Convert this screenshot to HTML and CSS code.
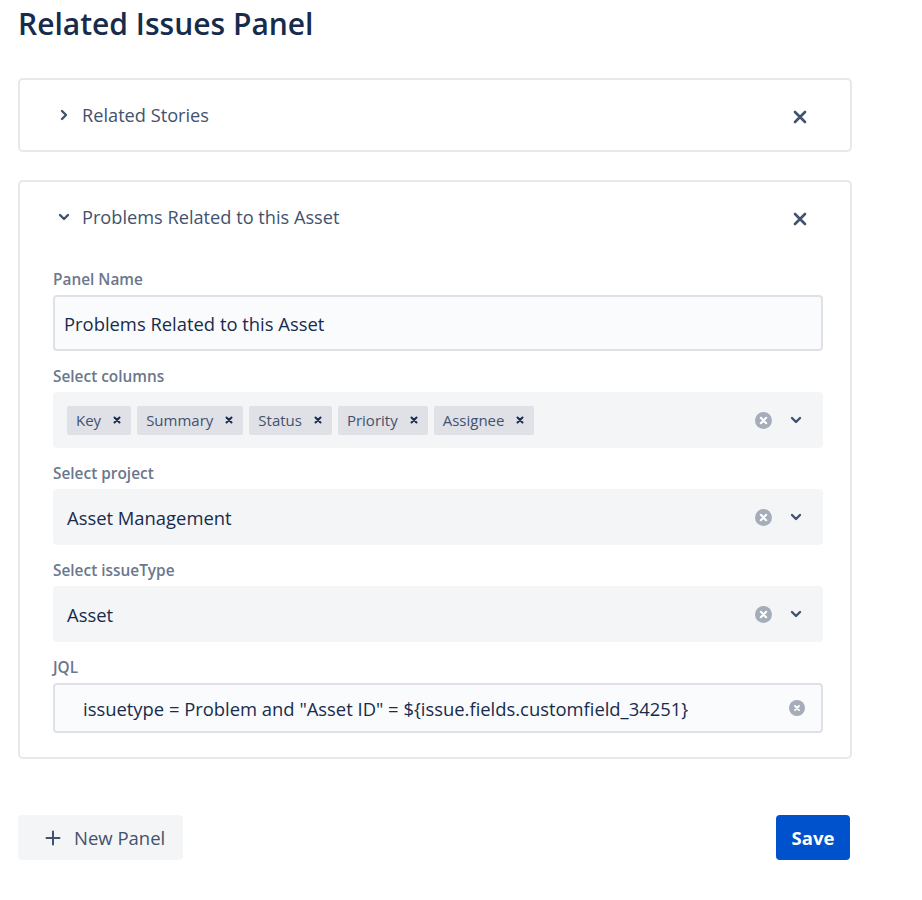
FILE: index.html
```html
<!DOCTYPE html>
<html lang="en">
<head>
<meta charset="utf-8">
<title>Related Issues Panel</title>
<link rel="stylesheet" href="styles.css">
</head>
<body>
<main class="page">
  <h1 class="title">Related Issues Panel</h1>

  <section class="card">
    <div class="card-header">
      <svg class="chev-right" width="10" height="12" viewBox="0 0 10 12"><path d="M3 2 L7 6 L3 10" fill="none" stroke="#42526E" stroke-width="2.4" stroke-linecap="round" stroke-linejoin="round"/></svg>
      <span class="card-title">Related Stories</span>
      <svg class="close" width="14" height="14" viewBox="0 0 14 14"><path d="M2 2 L12 12 M12 2 L2 12" stroke="#42526E" stroke-width="2.6" stroke-linecap="round"/></svg>
    </div>
  </section>

  <section class="card">
    <div class="card-header">
      <svg class="chev-down" width="12" height="10" viewBox="0 0 12 10"><path d="M2 3 L6 7 L10 3" fill="none" stroke="#42526E" stroke-width="2.4" stroke-linecap="round" stroke-linejoin="round"/></svg>
      <span class="card-title">Problems Related to this Asset</span>
      <svg class="close" width="14" height="14" viewBox="0 0 14 14"><path d="M2 2 L12 12 M12 2 L2 12" stroke="#42526E" stroke-width="2.6" stroke-linecap="round"/></svg>
    </div>
    <div class="card-body">
      <div class="field">
        <label class="label">Panel Name</label>
        <div class="input tall">Problems Related to this Asset</div>
      </div>
      <div class="field">
        <label class="label">Select columns</label>
        <div class="select">
          <div class="tags">
            <span class="tag">Key<svg class="tag-x" width="8" height="8" viewBox="0 0 8 8"><path d="M1.5 1.5 L6.5 6.5 M6.5 1.5 L1.5 6.5" stroke="#172B4D" stroke-width="2" stroke-linecap="round"/></svg></span>
            <span class="tag">Summary<svg class="tag-x" width="8" height="8" viewBox="0 0 8 8"><path d="M1.5 1.5 L6.5 6.5 M6.5 1.5 L1.5 6.5" stroke="#172B4D" stroke-width="2" stroke-linecap="round"/></svg></span>
            <span class="tag">Status<svg class="tag-x" width="8" height="8" viewBox="0 0 8 8"><path d="M1.5 1.5 L6.5 6.5 M6.5 1.5 L1.5 6.5" stroke="#172B4D" stroke-width="2" stroke-linecap="round"/></svg></span>
            <span class="tag">Priority<svg class="tag-x" width="8" height="8" viewBox="0 0 8 8"><path d="M1.5 1.5 L6.5 6.5 M6.5 1.5 L1.5 6.5" stroke="#172B4D" stroke-width="2" stroke-linecap="round"/></svg></span>
            <span class="tag">Assignee<svg class="tag-x" width="8" height="8" viewBox="0 0 8 8"><path d="M1.5 1.5 L6.5 6.5 M6.5 1.5 L1.5 6.5" stroke="#172B4D" stroke-width="2" stroke-linecap="round"/></svg></span>
          </div>
          <div class="indicators">
            <svg class="clear" width="17" height="17" viewBox="0 0 16 16"><circle cx="8" cy="8" r="8" fill="#A5ADBA"/><path d="M5.5 5.5 L10.5 10.5 M10.5 5.5 L5.5 10.5" stroke="#fff" stroke-width="2" stroke-linecap="round"/></svg>
            <svg class="dropdown" width="12" height="10" viewBox="0 0 12 10"><path d="M2 3 L6 7 L10 3" fill="none" stroke="#42526E" stroke-width="2.4" stroke-linecap="round" stroke-linejoin="round"/></svg>
          </div>
        </div>
      </div>
      <div class="field">
        <label class="label">Select project</label>
        <div class="select">
          <span class="value">Asset Management</span>
          <div class="indicators">
            <svg class="clear" width="17" height="17" viewBox="0 0 16 16"><circle cx="8" cy="8" r="8" fill="#A5ADBA"/><path d="M5.5 5.5 L10.5 10.5 M10.5 5.5 L5.5 10.5" stroke="#fff" stroke-width="2" stroke-linecap="round"/></svg>
            <svg class="dropdown" width="12" height="10" viewBox="0 0 12 10"><path d="M2 3 L6 7 L10 3" fill="none" stroke="#42526E" stroke-width="2.4" stroke-linecap="round" stroke-linejoin="round"/></svg>
          </div>
        </div>
      </div>
      <div class="field">
        <label class="label">Select issueType</label>
        <div class="select">
          <span class="value">Asset</span>
          <div class="indicators">
            <svg class="clear" width="17" height="17" viewBox="0 0 16 16"><circle cx="8" cy="8" r="8" fill="#A5ADBA"/><path d="M5.5 5.5 L10.5 10.5 M10.5 5.5 L5.5 10.5" stroke="#fff" stroke-width="2" stroke-linecap="round"/></svg>
            <svg class="dropdown" width="12" height="10" viewBox="0 0 12 10"><path d="M2 3 L6 7 L10 3" fill="none" stroke="#42526E" stroke-width="2.4" stroke-linecap="round" stroke-linejoin="round"/></svg>
          </div>
        </div>
      </div>
      <div class="field">
        <label class="label">JQL</label>
        <div class="input jql">
          <span class="jql-text">issuetype = Problem and "Asset ID" = ${issue.fields.customfield_34251}</span>
          <svg class="jql-clear" width="16" height="16" viewBox="0 0 16 16"><circle cx="8" cy="8" r="8" fill="#A5ADBA"/><path d="M6 6 L10 10 M10 6 L6 10" stroke="#fff" stroke-width="1.8" stroke-linecap="round"/></svg>
        </div>
      </div>
    </div>
  </section>

  <div class="footer">
    <button class="btn btn-new"><svg width="16" height="16" viewBox="0 0 16 16"><path d="M8 1.5 V14.5 M1.5 8 H14.5" stroke="#42526E" stroke-width="2" stroke-linecap="round"/></svg><span>New Panel</span></button>
    <button class="btn btn-save">Save</button>
  </div>
</main>
</body>
</html>
```

FILE: styles.css
```css
* { box-sizing: border-box; }

body {
  margin: 0;
  background: #ffffff;
  font-family: "Open Sans", "Noto Sans", "Liberation Sans", sans-serif;
  color: #172B4D;
}

.page {
  width: 834px;
  margin-left: 18px;
  display: flex;
  flex-direction: column;
}

.title {
  margin: 0 0 34px 0;
  padding-top: 4px;
  font-size: 30px;
  line-height: 40px;
  font-weight: 600;
  color: #172B4D;
}

.card {
  border: 2px solid #E6E8EC;
  border-radius: 5px;
  margin-bottom: 28px;
  background: #fff;
}

.card-header {
  height: 70px;
  display: flex;
  align-items: center;
  padding: 0 43px 0 38px;
}

.chev-right, .chev-down {
  flex: none;
}
.chev-right { margin-left: 1px; margin-right: 13px; }
.chev-down { margin-right: 12px; }

.card-title {
  flex: 1;
  font-size: 18.2px;
  color: #42526E;
  line-height: 24px;
}

.close { flex: none; margin-top: 4px; }

.card-body {
  display: flex;
  flex-direction: column;
  gap: 16px;
  padding: 18px 27px 24px 33px;
}

.field {
  display: flex;
  flex-direction: column;
}

.label {
  font-size: 15.4px;
  font-weight: 600;
  line-height: 20px;
  color: #6B778C;
  margin-bottom: 5px;
}

.input {
  border: 2px solid #DFE1E6;
  border-radius: 4px;
  background: #FAFBFC;
  display: flex;
  align-items: center;
  font-size: 18.4px;
  color: #172B4D;
}

.tall {
  height: 56px;
  padding-left: 9px;
}

.select {
  height: 56px;
  background: #F4F5F7;
  border-radius: 4px;
  display: flex;
  align-items: center;
  padding: 0 21px 0 14px;
}

.value {
  flex: 1;
  font-size: 18.4px;
  color: #172B4D;
}

.tags {
  flex: 1;
  display: flex;
  gap: 6px;
}

.tag {
  height: 29px;
  display: inline-flex;
  align-items: center;
  gap: 12px;
  padding: 0 10px 0 9px;
  background: #DFE1E6;
  border-radius: 2px;
  font-size: 15px;
  color: #42526E;
}

.indicators {
  display: flex;
  align-items: center;
  gap: 18px;
}

.jql {
  height: 50px;
  padding: 0 16px 0 28px;
}

.jql-text { flex: 1; }

.footer {
  margin-top: 28px;
  display: flex;
  justify-content: space-between;
  width: 832px;
}

.btn {
  height: 45px;
  border: none;
  border-radius: 4px;
  font-family: inherit;
  font-size: 18.5px;
  display: inline-flex;
  align-items: center;
}

.btn-new {
  background: #F4F5F7;
  color: #42526E;
  font-weight: 500;
  padding: 0 18px 0 27px;
  gap: 13px;
}

.btn-save {
  background: #0052CC;
  color: #fff;
  font-weight: 700;
  width: 74px;
  justify-content: center;
}
```
